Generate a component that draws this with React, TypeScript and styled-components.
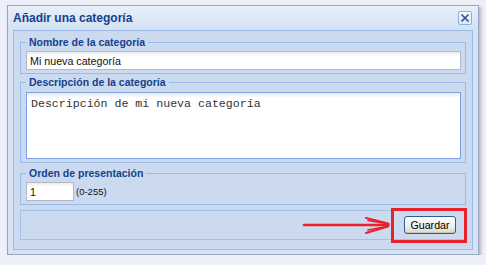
import React from "react";
import styled, { createGlobalStyle } from "styled-components";

const Global = createGlobalStyle`
  html, body { margin: 0; padding: 0; background: #eef0f9; }
  body { font-family: "Liberation Sans", Arial, sans-serif; }
  * { box-sizing: border-box; }
`;

const Page = styled.div`
  padding: 5px 0 0 7px;
`;

const Window = styled.div`
  width: 472px;
  height: 250px;
  border: 1px solid #98a8c2;
  background: #d7e3f5;
  box-shadow: 2px 2px 3px rgba(60, 70, 100, 0.35);
  display: flex;
  flex-direction: column;
`;

const Header = styled.div`
  height: 24px;
  display: flex;
  align-items: center;
  justify-content: space-between;
  padding: 0 5px 0 5px;
  background: linear-gradient(#e8eff9, #d3e1f3);
`;

const Title = styled.span`
  font-size: 12px;
  font-weight: bold;
  color: #15428b;
  padding-bottom: 1px;
`;

const CloseButton = styled.button`
  width: 14px;
  height: 14px;
  padding: 0;
  margin: 0 1px 0 0;
  border: 1px solid #8fb0e3;
  border-radius: 2px;
  background: linear-gradient(#f6f9fe, #dbe6f7);
  display: flex;
  align-items: center;
  justify-content: center;
  svg { display: block; }
`;

const Body = styled.div`
  margin: 0 5px 4px 5px;
  height: 220px;
  border: 1px solid #99bbe8;
  background: #cbdaee;
  padding: 5px 6px 8px 6px;
  display: flex;
  flex-direction: column;
`;

const FieldSet = styled.fieldset<{ $mt?: number; $pt?: number }>`
  margin: ${(p) => p.$mt ?? 0}px 0 0 0;
  padding: ${(p) => p.$pt ?? 3}px 4px 3px 5px;
  border: 1px solid #99bbe8;
  min-width: 0;
`;

const Legend = styled.legend`
  padding: 0 3px;
  margin: 0;
  font-size: 10.5px;
  line-height: 12px;
  height: 12px;
  font-weight: bold;
  color: #15428b;
`;

const TextInput = styled.input<{ $w?: number }>`
  display: block;
  width: ${(p) => (p.$w ? `${p.$w}px` : "100%")};
  height: 19px;
  margin: 0;
  padding: 0 3px;
  border: 1px solid #b5b8c8;
  background: linear-gradient(#ececec, #ffffff 4px, #ffffff);
  font-family: "Liberation Sans", Arial, sans-serif;
  font-size: 10.7px;
  color: #111;
  outline: none;
`;

const TextArea = styled.textarea`
  display: block;
  width: 100%;
  height: 67px;
  margin: 0;
  padding: 4px 4px 2px 4px;
  border: 1px solid #7c9fe0;
  background: linear-gradient(#e6e9f7, #ffffff 5px, #ffffff);
  font-family: "Liberation Mono", "Courier New", monospace;
  font-size: 11.6px;
  line-height: 14px;
  color: #333;
  resize: none;
  outline: none;
`;

const Row = styled.div`
  display: flex;
  align-items: center;
  gap: 2px;
`;

const Hint = styled.span`
  font-size: 9.5px;
  color: #111;
`;

const ButtonBar = styled.div`
  margin-top: 5px;
  height: 30px;
  border: 1px solid #a3c0eb;
  display: flex;
  align-items: center;
  justify-content: flex-end;
  padding-right: 9px;
`;

const Marked = styled.div`
  position: relative;
  display: flex;
  &::after {
    content: "";
    position: absolute;
    top: -8px;
    bottom: -9px;
    left: -13px;
    right: -11px;
    border: 3px solid #e8212a;
    pointer-events: none;
  }
`;

const Arrow = styled.svg`
  position: absolute;
  left: -104px;
  top: -3px;
  overflow: visible;
`;

const Button = styled.button`
  width: 52px;
  height: 18px;
  margin: 0;
  padding: 0 0 1px 0;
  border: 1px solid #2f5d91;
  border-radius: 3px;
  background: linear-gradient(#fdfdfc, #f1f0ec 55%, #dcd8cf);
  box-shadow: inset 0 -1px 0 #c9c5ba;
  font-family: "Liberation Sans", Arial, sans-serif;
  font-size: 10.7px;
  color: #000;
  display: flex;
  align-items: center;
  justify-content: center;
`;

export default function App() {
  return (
    <>
      <Global />
      <Page>
        <Window>
          <Header>
            <Title>Añadir una categoría</Title>
            <CloseButton aria-label="Cerrar">
              <svg width="10" height="10" viewBox="0 0 10 10">
                <path d="M1.5 1.5 L8.5 8.5 M8.5 1.5 L1.5 8.5" stroke="#2c4f94" strokeWidth="1.6" />
              </svg>
            </CloseButton>
          </Header>
          <Body>
            <FieldSet>
              <Legend>Nombre de la categoría</Legend>
              <TextInput defaultValue="Mi nueva categoría" />
            </FieldSet>
            <FieldSet $mt={2} $pt={4}>
              <Legend>Descripción de la categoría</Legend>
              <TextArea defaultValue="Descripción de mi nueva categoría" />
            </FieldSet>
            <FieldSet $mt={4}>
              <Legend>Orden de presentación</Legend>
              <Row>
                <TextInput $w={48} defaultValue="1" />
                <Hint>(0-255)</Hint>
              </Row>
            </FieldSet>
            <ButtonBar>
              <Marked>
                <Arrow width="92" height="24" viewBox="0 0 92 24">
                  <g stroke="#e8212a" strokeLinecap="round" fill="none">
                    <path d="M4 12 L88 12" strokeWidth="2.6" />
                    <path d="M66 5 L88 10.5" strokeWidth="2" />
                    <path d="M68 7.5 L89 11" strokeWidth="1.6" />
                    <path d="M66 20 L88 13.5" strokeWidth="2" />
                    <path d="M68 17 L89 13" strokeWidth="1.6" />
                  </g>
                </Arrow>
                <Button>Guardar</Button>
              </Marked>
            </ButtonBar>
          </Body>
        </Window>
      </Page>
    </>
  );
}
